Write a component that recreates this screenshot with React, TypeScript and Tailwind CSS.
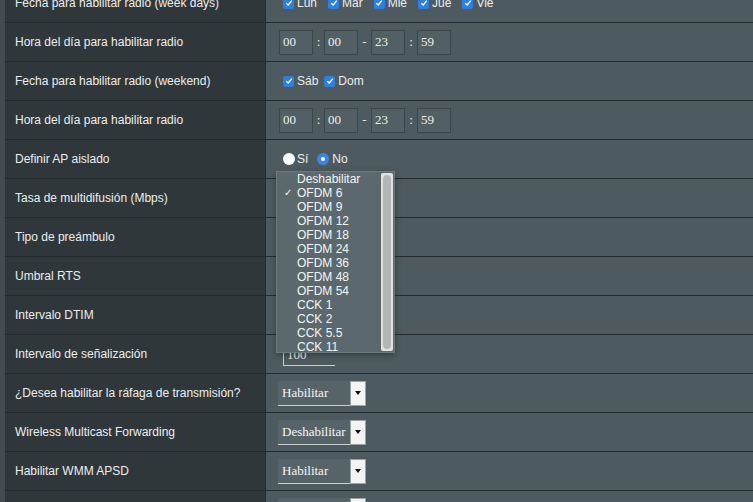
import React from "react";

type Row = { label: string; kind: string; value?: string };

const ROWS: Row[] = [
  { label: "Fecha para habilitar radio (week days)", kind: "weekdays" },
  { label: "Hora del día para habilitar radio", kind: "time" },
  { label: "Fecha para habilitar radio (weekend)", kind: "weekend" },
  { label: "Hora del día para habilitar radio", kind: "time" },
  { label: "Definir AP aislado", kind: "radio" },
  { label: "Tasa de multidifusión (Mbps)", kind: "empty" },
  { label: "Tipo de preámbulo", kind: "empty" },
  { label: "Umbral RTS", kind: "empty" },
  { label: "Intervalo DTIM", kind: "empty" },
  { label: "Intervalo de señalización", kind: "beacon" },
  { label: "¿Desea habilitar la ráfaga de transmisión?", kind: "select", value: "Habilitar" },
  { label: "Wireless Multicast Forwarding", kind: "select", value: "Deshabilitar" },
  { label: "Habilitar WMM APSD", kind: "select", value: "Habilitar" },
  { label: "", kind: "select", value: "Habilitar" },
];

const OPTIONS = [
  "Deshabilitar",
  "OFDM 6",
  "OFDM 9",
  "OFDM 12",
  "OFDM 18",
  "OFDM 24",
  "OFDM 36",
  "OFDM 48",
  "OFDM 54",
  "CCK 1",
  "CCK 2",
  "CCK 5.5",
  "CCK 11",
];

function Check({ label }: { label: string }) {
  return (
    <span className="flex items-center">
      <span className="flex h-[11px] w-[11px] items-center justify-center rounded-[2px] bg-[#2f7fe0]">
        <svg width="8" height="8" viewBox="0 0 8 8">
          <path d="M1.3 4.2 L3.2 6 L6.8 1.6" stroke="white" strokeWidth="1.3" fill="none" />
        </svg>
      </span>
      <span className="ml-[3px]">{label}</span>
    </span>
  );
}

function TimeBox({ v }: { v: string }) {
  return (
    <span className="flex h-[25px] w-[34px] items-center border border-[#3b464a] bg-[#525f64] pl-[3px] font-['Liberation_Serif',serif] text-[13px] text-[#eef0f0]">
      {v}
    </span>
  );
}

function Select({ value }: { value: string }) {
  return (
    <span className="flex h-[25px] w-[88px] items-stretch">
      <span className="flex flex-1 items-center overflow-hidden whitespace-nowrap border-b border-[#c9cfd1] bg-[#56646a] pl-[4px] font-['Liberation_Serif',serif] text-[13px] text-[#f6f6f6]">
        {value}
      </span>
      <span className="flex w-[16px] items-center justify-center border border-[#9aa3a6] bg-[#f4f4f4]">
        <svg width="6" height="4" viewBox="0 0 6 4">
          <path d="M0 0 H6 L3 4 Z" fill="#111" />
        </svg>
      </span>
    </span>
  );
}

function Value({ row }: { row: Row }) {
  if (row.kind === "weekdays")
    return (
      <div className="ml-[5px] flex items-center gap-[11px]">
        <Check label="Lun" />
        <Check label="Mar" />
        <Check label="Mie" />
        <Check label="Jue" />
        <Check label="Vie" />
      </div>
    );
  if (row.kind === "weekend")
    return (
      <div className="ml-[5px] flex items-center gap-[6px]">
        <Check label="Sáb" />
        <Check label="Dom" />
      </div>
    );
  if (row.kind === "time")
    return (
      <div className="ml-[1px] flex items-center font-['Liberation_Serif',serif] text-[13px] text-[#eef0f0]">
        <TimeBox v="00" />
        <span className="w-[11px] text-center">:</span>
        <TimeBox v="00" />
        <span className="w-[13px] text-center">-</span>
        <TimeBox v="23" />
        <span className="w-[12px] text-center">:</span>
        <TimeBox v="59" />
      </div>
    );
  if (row.kind === "radio")
    return (
      <div className="ml-[5px] flex items-center">
        <span className="h-[12px] w-[12px] rounded-full bg-white" />
        <span className="ml-[2px]">Sí</span>
        <span className="ml-[9px] flex h-[12px] w-[12px] items-center justify-center rounded-full bg-[#3a86e8]">
          <span className="h-[4px] w-[4px] rounded-full bg-white" />
        </span>
        <span className="ml-[3px]">No</span>
      </div>
    );
  if (row.kind === "beacon")
    return (
      <div className="ml-[5px] mt-[2px] flex h-[22px] w-[52px] items-center border-b border-l border-[#c9cfd1] pl-[3px] font-['Liberation_Serif',serif] text-[13px] text-[#eef0f0]">
        100
      </div>
    );
  if (row.kind === "select") return <Select value={row.value ?? ""} />;
  return null;
}

export default function App() {
  return (
    <div className="relative h-[502px] w-[753px] overflow-hidden bg-[#434c50] font-['Liberation_Sans',Arial,sans-serif] text-[12px] text-[#eceeee]">
      <div className="ml-[5px] -mt-[16px] flex flex-col">
        {ROWS.map((row, i) => (
          <div key={i} className="flex h-[39px] border-b border-[#242b2e]">
            <div className="flex w-[261px] items-center border-r border-[#242b2e] bg-[#2f373a] pl-[10px]">
              {row.label}
            </div>
            <div className="flex flex-1 items-center bg-[#4d5a5f] pl-[12px]">
              <Value row={row} />
            </div>
          </div>
        ))}
      </div>

      <div className="absolute left-[276px] top-[171px] flex h-[182px] w-[119px] border border-[#6d7a7f] bg-[#5b686d] shadow-[0_2px_6px_rgba(0,0,0,0.35)]">
        <ul className="flex-1 text-[12px] leading-[14px] text-[#f4f6f6]">
          {OPTIONS.map((o, i) => (
            <li key={o} className="relative pl-[20px]">
              {i === 1 && <span className="absolute left-[7px] text-[10px]">✓</span>}
              {o}
            </li>
          ))}
        </ul>
        <div className="mr-[1px] mt-[1px] mb-[1px] w-[12px] rounded-[2px] bg-[#e2e2e2] p-[2px]">
          <div className="h-full w-full rounded-full bg-[#b5b5b5]" />
        </div>
      </div>
    </div>
  );
}
